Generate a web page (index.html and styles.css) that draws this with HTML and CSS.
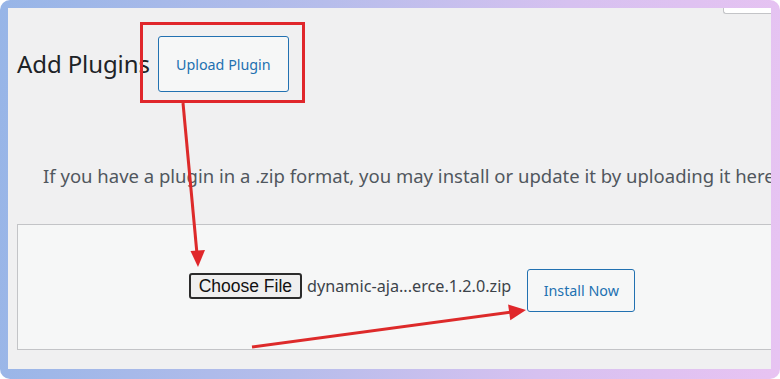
FILE: index.html
```html
<!DOCTYPE html>
<html lang="en">
<head>
<meta charset="utf-8">
<title>Add Plugins</title>
<link rel="stylesheet" href="styles.css">
</head>
<body>
<div class="frame">
  <div class="screen">
    <div class="topbar"><span class="tab"></span></div>
    <div class="title-row">
      <h1 class="title">Add Plugins</h1>
      <button class="btn upload-btn">Upload Plugin</button>
    </div>
    <p class="help">If you have a plugin in a .zip format, you may install or update it by uploading it here.</p>
    <div class="card">
      <div class="form-row">
        <span class="choose">Choose File</span>
        <span class="filename">dynamic-aja...erce.1.2.0.zip</span>
        <button class="btn install-btn">Install Now</button>
      </div>
    </div>
  </div>
  <svg class="annot" width="780" height="379" viewBox="0 0 780 379">
    <rect x="141.5" y="23.5" width="162" height="78" fill="none" stroke="#e0272b" stroke-width="3"/>
    <line x1="183" y1="103" x2="197" y2="254" stroke="#dd2a2a" stroke-width="3"/>
    <polygon points="198,267 190.5,251 205,250" fill="#e0272b"/>
    <line x1="252" y1="347" x2="512" y2="312" stroke="#dd2a2a" stroke-width="3"/>
    <polygon points="526,310 510.3,320.2 508.1,304.4" fill="#e0272b"/>
  </svg>
</div>
</body>
</html>
```

FILE: styles.css
```css
* { box-sizing: border-box; }
html, body { margin: 0; padding: 0; background: #ffffff; }
body { width: 780px; height: 379px; overflow: hidden; font-family: "Noto Sans", "Open Sans", sans-serif; }

.frame {
  position: relative;
  width: 780px;
  height: 379px;
  padding: 8px 9px 10px 8px;
  border-radius: 10px;
  background: linear-gradient(95deg, #97b5e7 0%, #b6bdeb 40%, #d6c1f0 70%, #e8c3f2 100%);
}

.screen {
  width: 763px;
  height: 361px;
  background: #f0f0f1;
  overflow: hidden;
  padding-left: 9px;
}

.topbar { display: flex; justify-content: flex-end; height: 6px; }
.tab {
  width: 48px;
  height: 6px;
  background: #ffffff;
  border: 1px solid #c3c4c7;
  border-top: none;
  border-right: none;
  border-bottom-left-radius: 3px;
}

.title-row {
  display: flex;
  align-items: center;
  gap: 8px;
  margin-top: 22px;
}
.title {
  margin: 0;
  font-size: 24px;
  font-weight: 400;
  color: #1d2327;
  line-height: 1.2;
  letter-spacing: -0.1px;
}

.btn {
  font-family: "Noto Sans", "Open Sans", sans-serif;
  background: #f6f7f7;
  border: 1px solid #2271b1;
  border-radius: 3px;
  color: #2271b1;
  font-size: 14.3px;
  cursor: pointer;
}
.upload-btn { width: 131px; height: 56px; padding: 0; }

.help {
  margin: 72px 0 0 26px;
  font-size: 18.5px;
  line-height: 24px;
  color: #50575e;
  white-space: nowrap;
}

.card {
  margin-top: 36px;
  width: 790px;
  height: 126px;
  background: #f6f7f7;
  border: 1px solid #c3c4c7;
  display: flex;
  justify-content: center;
  padding-top: 44px;
}
.form-row { display: flex; align-items: flex-start; }
.choose {
  margin-top: 4px;
  height: 26px;
  padding: 0 8px;
  border: 2px solid #2b2b2b;
  border-radius: 3px;
  background: #efefef;
  font-family: "Liberation Sans", Arial, sans-serif;
  font-size: 17.5px;
  line-height: 22px;
  color: #111;
}
.filename {
  margin: 4px 16px 0 5px;
  font-size: 16.2px;
  line-height: 26px;
  color: #3c434a;
}
.install-btn { width: 108px; height: 43px; padding: 0; }

.annot { position: absolute; left: 0; top: 0; pointer-events: none; }
```
